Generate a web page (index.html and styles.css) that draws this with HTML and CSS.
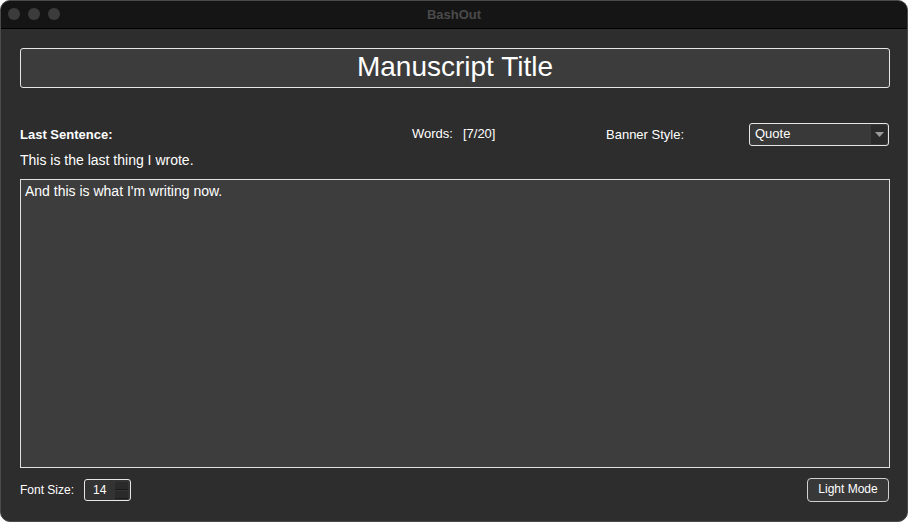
FILE: index.html
```html
<!DOCTYPE html>
<html>
<head>
<meta charset="utf-8">
<link rel="stylesheet" href="styles.css">
</head>
<body>
<div class="window">
  <div class="titlebar">
    <div class="lights"><span class="light"></span><span class="light"></span><span class="light"></span></div>
    <div class="wintitle">BashOut</div>
  </div>
  <div class="main">
    <div class="title-field">Manuscript Title</div>
    <div class="info-row">
      <div class="label-bold">Last Sentence:</div>
      <div class="words"><span>Words:</span><span class="count">[7/20]</span></div>
      <div>Banner Style:</div>
      <div class="select">
        <span class="select-value">Quote</span>
        <span class="select-arrow"><svg width="9" height="5" viewBox="0 0 9 5"><path d="M0 0 L9 0 L4.5 5 Z" fill="#9a9a9a"/></svg></span>
      </div>
    </div>
    <div class="last-line">This is the last thing I wrote.</div>
    <div class="editor">And this is what I'm writing now.</div>
    <div class="bottom-row">
      <div class="font-size">
        <span>Font Size:</span>
        <div class="spin">
          <span class="spin-value">14</span>
          <span class="stepper"><span class="step"></span><span class="step"></span></span>
        </div>
      </div>
      <div class="button">Light Mode</div>
    </div>
  </div>
</div>
</body>
</html>
```
FILE: styles.css
```css
html, body {
  margin: 0;
  padding: 0;
  background: #ffffff;
}
body {
  font-family: "Liberation Sans", Arial, sans-serif;
  color: #ffffff;
}
.window {
  box-sizing: border-box;
  width: 908px;
  height: 522px;
  border-radius: 10px;
  overflow: hidden;
  background: #2d2d2d;
  border: 1px solid #4a4a4a;
  display: flex;
  flex-direction: column;
}
.titlebar {
  height: 27px;
  background: #151515;
  border-bottom: 1px solid #000;
  display: flex;
  align-items: center;
  position: relative;
  flex: none;
}
.lights {
  display: flex;
  gap: 8px;
  padding-left: 7px;
  margin-top: -1px;
}
.light {
  width: 12px;
  height: 12px;
  border-radius: 50%;
  background: #3c3c3c;
}
.wintitle {
  position: absolute;
  left: 0;
  right: 0;
  top: 0;
  line-height: 27px;
  text-align: center;
  font-weight: bold;
  font-size: 13px;
  color: #4a4a4a;
}
.main {
  flex: 1;
  padding: 19px 17px 0 19px;
  display: flex;
  flex-direction: column;
}
.title-field {
  box-sizing: border-box;
  height: 40px;
  border: 1px solid #e6e6e6;
  border-radius: 3px;
  background: #3c3c3c;
  text-align: center;
  font-size: 28px;
  line-height: 36px;
}
.info-row {
  margin-top: 35px;
  height: 23px;
  display: grid;
  grid-template-columns: 392px 194px 143px 140px;
  align-items: center;
  font-size: 13px;
}
.label-bold {
  font-weight: bold;
  margin-top: -1px;
}
.words {
  display: flex;
  gap: 10px;
  margin-top: -3px;
}
.select {
  box-sizing: border-box;
  height: 23px;
  border: 1px solid #e6e6e6;
  border-radius: 3px;
  background: #393939;
  display: flex;
  align-items: stretch;
  justify-content: space-between;
}
.select-value {
  padding-left: 5px;
  line-height: 20px;
  font-size: 13px;
}
.select-arrow {
  width: 16px;
  background: #2a2a2a;
  display: flex;
  align-items: flex-start;
  justify-content: center;
  padding-top: 7px;
  margin: 1px 1px 1px 0;
  border-radius: 0 2px 2px 0;
}
.last-line {
  margin-top: 6px;
  font-size: 14px;
  line-height: 17px;
}
.editor {
  box-sizing: border-box;
  margin-top: 10px;
  height: 289px;
  border: 1px solid #e0e0e0;
  background: #3d3d3d;
  padding: 3px 4px;
  font-size: 14px;
  line-height: 17px;
}
.bottom-row {
  margin-top: 10px;
  height: 24px;
  display: flex;
  align-items: center;
  justify-content: space-between;
  font-size: 12px;
}
.font-size {
  display: flex;
  align-items: center;
  gap: 10px;
}
.spin {
  box-sizing: border-box;
  width: 47px;
  height: 22px;
  border: 1px solid #e6e6e6;
  border-radius: 3px;
  background: #333333;
  display: flex;
  align-items: center;
  justify-content: space-between;
  padding: 0 2px 0 8px;
}
.spin-value {
  font-size: 12px;
}
.stepper {
  display: flex;
  flex-direction: column;
  gap: 1px;
  width: 13px;
}
.step {
  height: 7px;
  background: #2a2a2a;
  border-bottom: 1px solid #1a1a1a;
}
.button {
  box-sizing: border-box;
  width: 82px;
  height: 24px;
  margin-right: 1px;
  border: 1px solid #d0d0d0;
  border-radius: 4px;
  background: #383838;
  text-align: center;
  line-height: 21px;
  font-size: 12px;
}
```
